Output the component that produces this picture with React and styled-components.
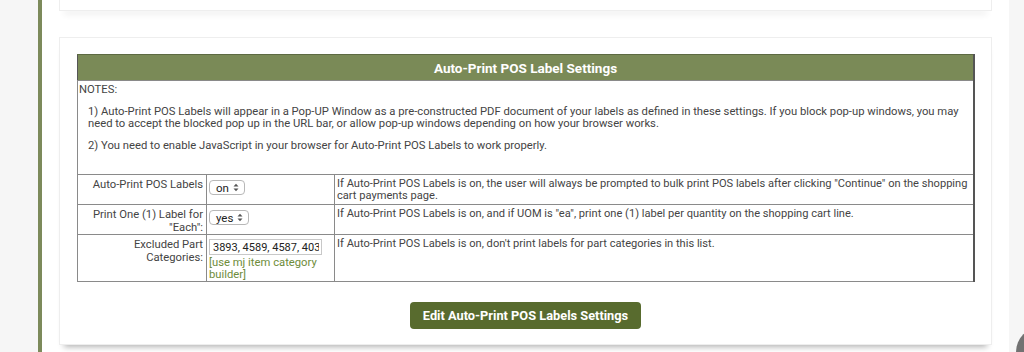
import styled, { createGlobalStyle } from "styled-components";

const GlobalStyle = createGlobalStyle`
  html, body {
    margin: 0;
    padding: 0;
    background: #f6f6f6;
    font-family: Roboto, "Liberation Sans", sans-serif;
  }
`;

const Page = styled.div`
  display: flex;
  width: 1024px;
  height: 352px;
  overflow: hidden;
  position: relative;
  .gutter {
    width: 38px;
    background: #f6f6f6;
  }
  .accent {
    width: 4px;
    background: #7c8a5b;
  }
  .content {
    width: 967px;
    background: #fff;
    padding: 0 17px 0 17px;
    box-sizing: border-box;
    display: flex;
    flex-direction: column;
    gap: 26px;
  }
`;

const Card = styled.div`
  background: #fff;
  border: 1px solid #eeeeee;
  box-sizing: border-box;
  box-shadow: 0 7px 6px -5px rgba(0, 0, 0, 0.3);
  height: ${(p) => (p.$stub ? "11px" : "auto")};
  border-top: ${(p) => (p.$stub ? "none" : "1px solid #eee")};
  padding: ${(p) => (p.$stub ? "0" : "16px 17px 15px 17px")};
`;

const SettingsTable = styled.table`
  width: 898px;
  border-collapse: collapse;
  border: 1px solid #555;
  border-right-width: 2px;
  font-size: 11.25px;
  line-height: 12px;
  color: #444;
  th {
    background: #7a8a57;
    color: #fff;
    font-size: 13.5px;
    font-weight: bold;
    height: 25px;
    padding: 0;
    border-top: 1px solid #5d6a42;
  }
  td {
    border: 1px solid #8a8a8a;
    vertical-align: top;
    padding: 1px 2px;
  }
  td.notes {
    padding: 2px 1px 0 1px;
    height: 91px;
  }
  td.label {
    width: 123px;
    text-align: right;
    padding: 4px 3px 0 2px;
    line-height: 12.5px;
  }
  td.field {
    width: 123px;
    padding: 4px 2px 0 2px;
  }
  td.desc {
    font-size: 11.1px;
    padding: 3px 2px 0 2px;
  }
`;

const Row = styled.tr`
  height: ${(p) => p.$h}px;
`;

const Notes = styled.div`
  p {
    margin: 10px 0 0 9px;
  }
  p:first-child {
    margin: 1px 0 0 0;
  }
`;

const SelectBox = styled.div`
  display: inline-flex;
  align-items: center;
  gap: 4px;
  height: 15px;
  padding: 0 5px 0 6px;
  border: 1px solid #b8b8b8;
  border-radius: 4px;
  box-sizing: border-box;
  background: #fff;
  color: #222;
  font-size: 11.5px;
  margin-top: 1px;
`;

const TextInput = styled.input`
  width: 113px;
  height: 16px;
  box-sizing: border-box;
  border: 1px solid #c8c8c8;
  padding: 0 2px 0 3px;
  font-family: Roboto, "Liberation Sans", sans-serif;
  font-size: 11px;
  color: #222;
  display: block;
  margin-bottom: 2px;
`;

const Link = styled.a`
  color: #6e8c3a;
  text-decoration: none;
  display: block;
  line-height: 12px;
`;

const ButtonRow = styled.div`
  display: flex;
  justify-content: center;
  padding-top: 20px;
`;

const Button = styled.button`
  background: #586b2e;
  color: #fff;
  border: none;
  border-radius: 4px;
  height: 27px;
  padding: 0 13px;
  font-family: Roboto, "Liberation Sans", sans-serif;
  font-weight: bold;
  font-size: 12.8px;
`;

const ChatBubble = styled.div`
  position: absolute;
  left: 1016px;
  top: 327px;
  width: 50px;
  height: 50px;
  border-radius: 50%;
  background: #727272;
`;

const Arrows = () => (
  <svg width="6" height="9" viewBox="0 0 6 9">
    <path d="M0.5 3.5 L3 0.8 L5.5 3.5 Z M0.5 5.5 L3 8.2 L5.5 5.5 Z" fill="#555" />
  </svg>
);

const Select = ({ value }) => (
  <SelectBox>
    {value}
    <Arrows />
  </SelectBox>
);

export default function App() {
  return (
    <Page>
      <GlobalStyle />
      <div className="gutter" />
      <div className="accent" />
      <div className="content">
        <Card $stub />
        <Card>
          <SettingsTable>
            <thead>
              <tr>
                <th colSpan={3}>Auto-Print POS Label Settings</th>
              </tr>
            </thead>
            <tbody>
              <tr>
                <td className="notes" colSpan={3}>
                  <Notes>
                    <p>NOTES:</p>
                    <p>
                      1) Auto-Print POS Labels will appear in a Pop-UP Window as a pre-constructed PDF
                      document of your labels as defined in these settings. If you block pop-up windows,
                      you may need to accept the blocked pop up in the URL bar, or allow pop-up windows
                      depending on how your browser works.
                    </p>
                    <p>
                      2) You need to enable JavaScript in your browser for Auto-Print POS Labels to work
                      properly.
                    </p>
                  </Notes>
                </td>
              </tr>
              <Row $h={30}>
                <td className="label">Auto-Print POS Labels</td>
                <td className="field">
                  <Select value="on" />
                </td>
                <td className="desc">
                  If Auto-Print POS Labels is on, the user will always be prompted to bulk print POS
                  labels after clicking "Continue" on the shopping cart payments page.
                </td>
              </Row>
              <Row $h={30}>
                <td className="label">Print One (1) Label for "Each":</td>
                <td className="field">
                  <Select value="yes" />
                </td>
                <td className="desc">
                  If Auto-Print POS Labels is on, and if UOM is "ea", print one (1) label per quantity
                  on the shopping cart line.
                </td>
              </Row>
              <Row $h={47}>
                <td className="label">Excluded Part Categories:</td>
                <td className="field">
                  <TextInput readOnly value="3893, 4589, 4587, 403" />
                  <Link href="#">[use mj item category builder]</Link>
                </td>
                <td className="desc">
                  If Auto-Print POS Labels is on, don't print labels for part categories in this list.
                </td>
              </Row>
            </tbody>
          </SettingsTable>
          <ButtonRow>
            <Button>Edit Auto-Print POS Labels Settings</Button>
          </ButtonRow>
        </Card>
      </div>
      <ChatBubble />
    </Page>
  );
}
